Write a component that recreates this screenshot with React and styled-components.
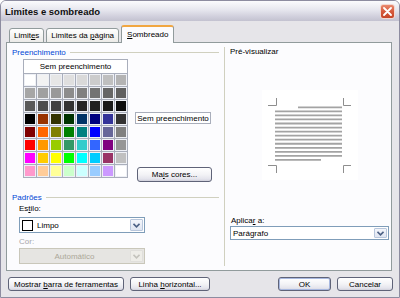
import React from "react"
import styled, { createGlobalStyle } from "styled-components"

const Global = createGlobalStyle`
    html, body {
        margin: 0;
        padding: 0;
        background: #ffffff;
    }
    body {
        font-family: "Liberation Sans", Arial, sans-serif;
        font-size: 8px;
        color: #000;
    }
`

const Frame = styled.div`
    width: 400px;
    height: 298px;
    box-sizing: border-box;
    display: flex;
    flex-direction: column;
    background: #e6e5e9;
    border: 1px solid #8d8ca0;
    border-radius: 6px 6px 0 0;
    overflow: hidden;
`

const TitleBar = styled.div`
    height: 20px;
    flex: none;
    display: flex;
    align-items: center;
    justify-content: space-between;
    padding: 0 4px 0 4px;
    background: linear-gradient(to bottom, #fbfbfd 0%, #e6e6ee 45%, #cfcedb 80%, #c3c2d0 100%);
`

const Title = styled.span`
    font-weight: bold;
    font-size: 9.5px;
    color: #101010;
`

const CloseButton = styled.div`
    width: 15px;
    height: 15px;
    box-sizing: border-box;
    border: 1px solid #f4d7cf;
    border-radius: 3px;
    background: linear-gradient(to bottom, #e98a70 0%, #d6593b 50%, #c64528 100%);
    display: flex;
    align-items: center;
    justify-content: center;
    margin-top: 1px;
`

const Body = styled.div`
    flex: 1;
    display: flex;
    flex-direction: column;
    padding: 4px 7px 0 5px;
`

const TabRow = styled.div`
    height: 18px;
    display: flex;
    align-items: flex-end;
    gap: 2px;
    padding-left: 3px;
    position: relative;
    z-index: 1;
`

const Tab = styled.div`
    box-sizing: border-box;
    height: ${p => (p.$active ? "18px" : "15px")};
    padding: ${p => (p.$active ? "0 5px 2px" : "0 4px")};
    margin-right: ${p => (p.$active ? "-2px" : "0")};
    display: flex;
    align-items: center;
    white-space: pre;
    border: 1px solid #919b9c;
    border-bottom: ${p => (p.$active ? "none" : "1px solid #919b9c")};
    border-top: ${p => (p.$active ? "2px solid #f1a742" : "1px solid #919b9c")};
    border-radius: 3px 3px 0 0;
    background: ${p =>
        p.$active ? "#fcfcfe" : "linear-gradient(to bottom, #ffffff, #ecebe8)"};
`

const Panel = styled.div`
    height: 229px;
    box-sizing: border-box;
    margin-top: -1px;
    display: flex;
    border: 1px solid #919b9c;
    background: #fcfcfe;
`

const LeftColumn = styled.div`
    width: 217px;
    box-sizing: border-box;
    padding: 4px 5px 0 5px;
    display: flex;
    flex-direction: column;
`

const RightColumn = styled.div`
    flex: 1;
    box-sizing: border-box;
    margin: 4px 0 4px 0;
    padding: 0 1px 0 5px;
    border-left: 1px solid #d0d0bf;
    display: flex;
    flex-direction: column;
`

const GroupHeader = styled.div`
    display: flex;
    align-items: center;
    gap: 4px;
    height: 10px;
    margin-top: ${p => p.$top || 0}px;
    color: #0046d5;

    &::after {
        content: "";
        flex: 1;
        height: 1px;
        background: #d0d0bf;
    }
`

const PaletteRow = styled.div`
    display: flex;
    gap: 7px;
    margin-top: 2px;
    padding-left: 11px;
`

const Palette = styled.div`
    width: 105px;
    display: flex;
    flex-direction: column;
`

const NoFill = styled.div`
    height: 14px;
    box-sizing: border-box;
    border: 1px solid #a9aebb;
    border-bottom: none;
    background: #ffffff;
    display: flex;
    align-items: center;
    justify-content: center;
`

const SwatchGrid = styled.div`
    display: grid;
    grid-template-columns: repeat(8, 12px);
    grid-auto-rows: 12px;
    gap: 1px;
    padding: 1px;
    background: #a9aebb;
`

const Swatch = styled.div`
    background: ${p => p.$color};
    box-shadow: inset 0 0 0 1px #eef0f5;
`

const SideColumn = styled.div`
    display: flex;
    flex-direction: column;
    align-items: flex-start;
`

const FillLabel = styled.div`
    margin-top: 53px;
    width: 76px;
    height: 12px;
    box-sizing: border-box;
    border: 1px solid #a9aebb;
    background: #ffffff;
    display: flex;
    align-items: center;
    justify-content: center;
`

const Button = styled.div`
    box-sizing: border-box;
    width: ${p => p.$w}px;
    height: ${p => p.$h || 14}px;
    margin-top: ${p => p.$top || 0}px;
    margin-left: ${p => p.$left || 0}px;
    border: 1px solid #5f6378;
    border-radius: 3px;
    background: linear-gradient(to bottom, #ffffff 0%, #f3f3f6 50%, #e4e4ec 85%, #cfcfda 100%);
    display: flex;
    align-items: center;
    justify-content: center;
    white-space: pre;
    box-shadow: ${p => (p.$default ? "inset 0 0 0 1px #a8b8e0" : "none")};
`

const FieldLabel = styled.div`
    height: 10px;
    line-height: 10px;
    margin-top: ${p => p.$top || 0}px;
    padding-left: ${p => p.$indent || 0}px;
    color: ${p => (p.$disabled ? "#a7a6aa" : "#000")};
`

const Combo = styled.div`
    box-sizing: border-box;
    width: ${p => p.$w}px;
    height: ${p => p.$h || 16}px;
    margin-top: ${p => p.$top || 0}px;
    margin-left: ${p => p.$left || 0}px;
    border: 1px solid ${p => (p.$disabled ? "#c9c7ba" : "#7f9db9")};
    background: ${p => (p.$disabled ? "#e6e5e2" : "#ffffff")};
    display: flex;
    align-items: stretch;
`

const ComboValue = styled.div`
    flex: 1;
    display: flex;
    align-items: center;
    gap: 4px;
    padding-left: ${p => (p.$center ? 0 : 2)}px;
    justify-content: ${p => (p.$center ? "center" : "flex-start")};
    color: ${p => (p.$disabled ? "#aca899" : "#000")};
`

const StyleBox = styled.span`
    width: 11px;
    height: 11px;
    box-sizing: border-box;
    border: 1px solid #000;
    background: #fff;
`

const DropButton = styled.div`
    width: 13px;
    margin: 1px;
    box-sizing: border-box;
    border: 1px solid ${p => (p.$disabled ? "#e0dfdb" : "#b8c6dc")};
    border-radius: 1px;
    background: ${p =>
        p.$disabled ? "#eeede8" : "linear-gradient(to bottom, #f4f6fb, #dfe5f1)"};
    display: flex;
    align-items: center;
    justify-content: center;
`

const Footer = styled.div`
    display: flex;
    gap: 6px;
    margin: 6px -1px 0 2px;
`

const Spacer = styled.div`
    flex: 1;
`

const Key = styled.span`
    text-decoration: underline;
`

const swatches = [
    "#ffffff", "#f2f2f2", "#e6e6e6", "#dfdfdf", "#d9d9d9", "#cccccc", "#bfbfbf", "#b3b3b3",
    "#a6a6a6", "#a0a0a0", "#999999", "#8c8c8c", "#808080", "#737373", "#666666", "#606060",
    "#595959", "#4d4d4d", "#404040", "#333333", "#262626", "#202020", "#1a1a1a", "#0d0d0d",
    "#000000", "#993300", "#333300", "#003300", "#003366", "#000080", "#333399", "#333333",
    "#800000", "#ff6600", "#808000", "#008000", "#008080", "#0000ff", "#666699", "#808080",
    "#ff0000", "#ff9900", "#99cc00", "#339966", "#33cccc", "#3366ff", "#800080", "#969696",
    "#ff00ff", "#ffcc00", "#ffff00", "#00ff00", "#00ffff", "#00ccff", "#993366", "#c0c0c0",
    "#ff99cc", "#ffcc99", "#ffff99", "#ccffcc", "#ccffff", "#99ccff", "#cc99ff", "#ffffff",
]

const Chevron = ({ color = "#4d6185" }) => (
    <svg width="7" height="5" viewBox="0 0 7 5">
        <path d="M0.5 0.8 L3.5 3.8 L6.5 0.8" fill="none" stroke={color} strokeWidth="1.6" />
    </svg>
)

const CloseIcon = () => (
    <svg width="9" height="9" viewBox="0 0 9 9">
        <path d="M1 1 L8 8 M8 1 L1 8" stroke="#ffffff" strokeWidth="1.8" strokeLinecap="round" />
    </svg>
)

const Preview = () => {
    const lines = []
    for (let i = 0; i < 14; i++) {
        let x1 = 13
        let x2 = 80
        if (i === 0) x1 = 36
        if (i === 13) x2 = 59
        const y = 17.3 + i * 4.05
        lines.push(<line key={i} x1={x1} x2={x2} y1={y} y2={y} stroke="#a3a3a3" strokeWidth="1.8" />)
    }
    return (
        <svg width="96" height="90" viewBox="0 0 96 90" style={{ display: "block", margin: "33px auto 0" }}>
            <rect x="0" y="0" width="96" height="90" fill="#ffffff" />
            <g stroke="#8e8e8e" strokeWidth="1" fill="none">
                <path d="M14.5 8 V15.5 H6" />
                <path d="M81.5 8 V15.5 H89" />
                <path d="M6 75.5 H14.5 V83" />
                <path d="M89 75.5 H81.5 V83" />
            </g>
            {lines}
        </svg>
    )
}

export default () => (
    <>
        <Global />
        <Frame>
            <TitleBar>
                <Title>Limites e sombreado</Title>
                <CloseButton>
                    <CloseIcon />
                </CloseButton>
            </TitleBar>
            <Body>
                <TabRow>
                    <Tab><span>Limit<Key>e</Key>s</span></Tab>
                    <Tab><span>Limites da <Key>p</Key>ágina</span></Tab>
                    <Tab $active><span><Key>S</Key>ombreado</span></Tab>
                </TabRow>
                <Panel>
                    <LeftColumn>
                        <GroupHeader>Preenchimento</GroupHeader>
                        <PaletteRow>
                            <Palette>
                                <NoFill>Sem preenchimento</NoFill>
                                <SwatchGrid>
                                    {swatches.map((c, i) => (
                                        <Swatch key={i} $color={c} />
                                    ))}
                                </SwatchGrid>
                            </Palette>
                            <SideColumn>
                                <FillLabel>Sem preenchimento</FillLabel>
                                <Button $w={75} $h={15} $top={43} $left={2}>
                                    <span>Ma<Key>i</Key>s cores...</span>
                                </Button>
                            </SideColumn>
                        </PaletteRow>
                        <GroupHeader $top={10}>Padrões</GroupHeader>
                        <FieldLabel $top={2} $indent={7}>Es<Key>t</Key>ilo:</FieldLabel>
                        <Combo $w={126} $top={3} $left={7}>
                            <ComboValue>
                                <StyleBox />
                                Limpo
                            </ComboValue>
                            <DropButton>
                                <Chevron />
                            </DropButton>
                        </Combo>
                        <FieldLabel $top={4} $indent={7} $disabled>Cor:</FieldLabel>
                        <Combo $w={126} $top={1} $left={7} $disabled>
                            <ComboValue $center $disabled>Automático</ComboValue>
                            <DropButton $disabled>
                                <Chevron color="#c4c3bc" />
                            </DropButton>
                        </Combo>
                    </LeftColumn>
                    <RightColumn>
                        <FieldLabel>Pré-visualizar</FieldLabel>
                        <Preview />
                        <FieldLabel $top={36} $indent={1}>Aplica<Key>r</Key> a:</FieldLabel>
                        <Combo $w={159} $h={14}>
                            <ComboValue>Parágrafo</ComboValue>
                            <DropButton>
                                <Chevron />
                            </DropButton>
                        </Combo>
                    </RightColumn>
                </Panel>
                <Footer>
                    <Button $w={116}><span>Mostrar <Key>b</Key>arra de ferramentas</span></Button>
                    <Button $w={80}><span>Linha <Key>h</Key>orizontal...</span></Button>
                    <Spacer />
                    <Button $w={53} $default><span>OK</span></Button>
                    <Button $w={56}><span>Cancelar</span></Button>
                </Footer>
            </Body>
        </Frame>
    </>
)
